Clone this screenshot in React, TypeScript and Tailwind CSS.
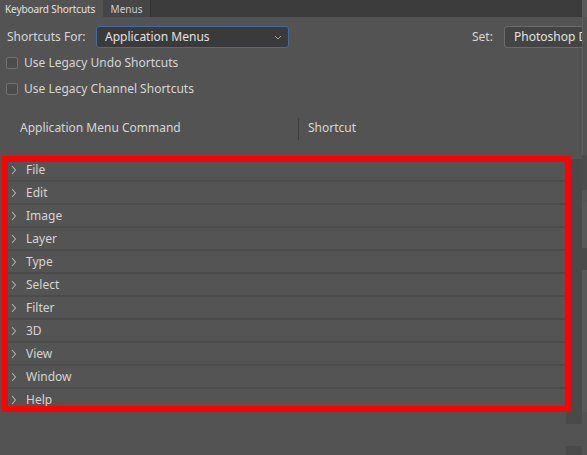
import React from "react";

const items = ["File", "Edit", "Image", "Layer", "Type", "Select", "Filter", "3D", "View", "Window", "Help"];

function Chevron() {
  return (
    <svg width="6" height="10" viewBox="0 0 6 10" className="shrink-0">
      <path d="M1 1 L4.5 5 L1 9" fill="none" stroke="#b0b0b0" strokeWidth="1.1" />
    </svg>
  );
}

function Checkbox({ label }: { label: string }) {
  return (
    <div className="flex items-center h-[26px] pl-[6px]">
      <div className="w-[12px] h-[12px] rounded-[2px] border border-[#727272] bg-[#4c4c4c]" />
      <span className="ml-[6px] text-[12px] text-[#d6d6d6]">{label}</span>
    </div>
  );
}

export default function App() {
  return (
    <div
      className="relative w-[587px] h-[455px] overflow-hidden bg-[#535353] flex"
      style={{ fontFamily: '"Noto Sans", "Open Sans", sans-serif' }}
    >
      <div className="w-[582px] flex flex-col">
        {/* Tab bar */}
        <div className="h-[17px] bg-[#3c3c3c] flex shrink-0">
          <div className="w-[103px] bg-[#535353] flex items-center pl-[5px] text-[10px] text-[#e2e2e2] leading-none whitespace-nowrap tracking-[-0.1px]">
            Keyboard Shortcuts
          </div>
          <div className="w-[48px] bg-[#464646] border-r border-[#333] flex items-center justify-center text-[10px] text-[#cfcfcf] leading-none whitespace-nowrap">
            Menus
          </div>
        </div>

        {/* Shortcuts For row */}
        <div className="flex items-center h-[22px] mt-[9px] shrink-0">
          <div className="w-[96px] pl-[7px] text-[12px] text-[#d6d6d6] whitespace-nowrap">Shortcuts For:</div>
          <div className="w-[193px] h-[22px] rounded-[3px] border border-[#3a6ea8] bg-[#3a3a3a] flex items-center pl-[8px] pr-[6px]">
            <span className="flex-1 text-[12px] text-[#e2e2e2] whitespace-nowrap">Application Menus</span>
            <svg width="8" height="5" viewBox="0 0 8 5">
              <path d="M1 1 L4 4 L7 1" fill="none" stroke="#a0a0a0" strokeWidth="1" />
            </svg>
          </div>
          <div className="flex-1" />
          <div className="w-[32px] text-[12px] text-[#d6d6d6]">Set:</div>
          <div className="w-[90px] -mr-[12px] h-[22px] rounded-[3px] border border-[#6a6a6a] bg-[#444444] flex items-center pl-[9px] overflow-hidden whitespace-nowrap">
            <span className="text-[12px] text-[#e2e2e2]">Photoshop Defaults</span>
          </div>
        </div>

        {/* Checkboxes */}
        <div className="mt-[2px] flex flex-col shrink-0">
          <Checkbox label="Use Legacy Undo Shortcuts" />
          <Checkbox label="Use Legacy Channel Shortcuts" />
        </div>

        {/* Header */}
        <div className="mt-[16px] h-[22px] flex items-center shrink-0">
          <div className="w-[298px] pl-[20px] text-[12px] text-[#d6d6d6] -mt-[2px]">Application Menu Command</div>
          <div className="w-px h-[22px] bg-[#3e3e3e]" />
          <div className="pl-[9px] text-[12px] text-[#d6d6d6] -mt-[2px]">Shortcut</div>
        </div>

        {/* List */}
        <div className="mt-[19px] ml-[2px] h-[265px] flex shrink-0">
          <div className="w-[564px] flex flex-col">
            {items.map((it) => (
              <div
                key={it}
                className="h-[23px] shrink-0 bg-[#545454] border-b-2 border-[#4b4b4b] flex items-center pl-[9px]"
              >
                <Chevron />
                <span className="ml-[9px] text-[12px] text-[#d4d4d4]">{it}</span>
              </div>
            ))}
          </div>
          <div className="w-[16px] h-[265px] bg-[#4a4a4a]" />
        </div>

        <div className="flex-1 flex justify-end items-end">
          <div className="w-[16px] h-[9px] bg-[#4a4a4a]" />
        </div>
      </div>

      {/* Right edge strip */}
      <div className="w-[5px] flex flex-col">
        <div className="h-[17px] bg-[#5a5a5a]" />
        <div className="h-[138px] bg-[#535353] border-l border-[#5e5e5e]" />
        <div className="h-[35px] bg-[#4c4c4c]" />
        <div className="h-[12px] bg-[#555555]" />
        <div className="h-[46px] bg-[#585858]" />
        <div className="h-[22px] bg-[#4a4a4a]" />
        <div className="h-[142px] bg-[#585858]" />
        <div className="flex-1 bg-[#535353]" />
      </div>

      {/* Red annotation outline */}
      <div className="absolute left-[2px] top-[156px] w-[569px] h-[256px] border-[6px] border-[#ff0000] pointer-events-none" />
    </div>
  );
}
